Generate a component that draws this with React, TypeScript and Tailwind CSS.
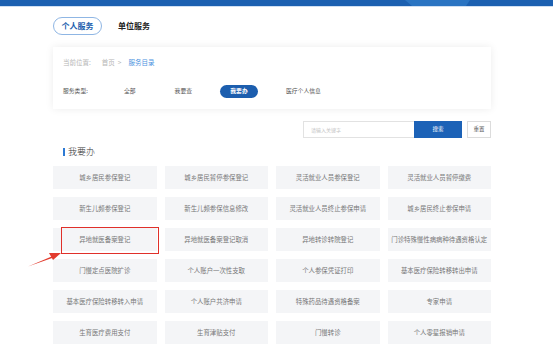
import React from "react";

const items = [
  "城乡居民参保登记",
  "城乡居民暂停参保登记",
  "灵活就业人员参保登记",
  "灵活就业人员暂停缴费",
  "新生儿频参保登记",
  "新生儿频参保信息修改",
  "灵活就业人员终止参保申请",
  "城乡居民终止参保申请",
  "异地就医备案登记",
  "异地就医备案登记取消",
  "异地转诊转院登记",
  "门诊特殊慢性病病种待遇资格认定",
  "门慢定点医院扩诊",
  "个人账户一次性支取",
  "个人参保凭证打印",
  "基本医疗保险转移转出申请",
  "基本医疗保险转移转入申请",
  "个人账户共济申请",
  "特殊药品待遇资格备案",
  "专家申请",
  "生育医疗费用支付",
  "生育津贴支付",
  "门慢转诊",
  "个人零星报销申请",
];

const font = { fontFamily: '"Noto Sans CJK SC", "Noto Sans", sans-serif' };

export default function App() {
  return (
    <div className="relative w-[553px] h-[357px] bg-white overflow-hidden" style={font}>
      {/* top bar */}
      <div className="relative h-[6px] bg-[#1b60b1]">
        <svg className="absolute left-0 top-0" width="553" height="6">
          <polygon points="405,0 470,0 466,6 412,6" fill="#2a74c2" />
        </svg>
      </div>
      <div className="h-px bg-[#cfdff2]" />

      <div className="ml-[53px] w-[438px]">
        {/* tabs */}
        <div className="mt-[10px] flex items-center h-[18px]">
          <div className="h-[18px] w-[49px] rounded-full border border-[#8fb6e4] flex items-center justify-center text-[8px] font-bold text-[#1d5fae]">
            个人服务
          </div>
          <div className="ml-[16px] text-[8px] font-bold text-[#222]">单位服务</div>
        </div>

        {/* filter card */}
        <div className="mt-[12px] h-[62px] bg-white shadow-[0_0_8px_rgba(0,0,0,0.08)] px-[10px] pt-[12px]">
          <div className="flex items-center h-[8px] text-[6.5px] text-[#b5b5b5]">
            <span>当前位置:</span>
            <span className="ml-[11px]">首页</span>
            <span className="ml-[3px]">&gt;</span>
            <span className="ml-[7px] text-[#4c92e0]">服务目录</span>
          </div>
          <div className="mt-[18px] flex items-center h-[13px] text-[5.8px] text-[#555]">
            <span className="w-[27px]">服务类型:</span>
            <span className="ml-[34px]">全部</span>
            <span className="ml-[39px]">我要查</span>
            <span className="ml-[28px] h-[13px] w-[38px] rounded-full bg-[#1c5eae] text-white font-bold flex items-center justify-center">
              我要办
            </span>
            <span className="ml-[28px]">医疗个人信息</span>
          </div>
        </div>

        {/* search */}
        <div className="mt-[12px] flex justify-end items-center h-[17px]">
          <div className="h-[17px] w-[111px] border border-[#e2e2e2] border-r-0 flex items-center pl-[7px] text-[5px] text-[#c4c4c4]">
            请输入关键字
          </div>
          <div className="h-[17px] w-[48px] bg-[#1c62b7] text-white text-[5.5px] flex items-center justify-center">
            搜索
          </div>
          <div className="ml-[5px] h-[17px] w-[24px] border border-[#dcdcdc] text-[5.5px] text-[#555] flex items-center justify-center">
            重置
          </div>
        </div>

        {/* heading */}
        <div className="mt-[8px] flex items-center h-[12px] pl-[10px]">
          <div className="w-[2px] h-[8px] bg-[#2e7ad4]" />
          <span className="ml-[3px] text-[9px] font-light text-[#333]">我要办</span>
        </div>

        {/* grid */}
        <div className="mt-[8px] grid grid-cols-4 gap-x-[8px] gap-y-[8px]">
          {items.map((t) => (
            <div
              key={t}
              className="h-[23px] bg-[#f4f5f7] flex items-center justify-center text-[6.4px] text-[#777] whitespace-nowrap"
            >
              {t}
            </div>
          ))}
        </div>
      </div>

      {/* annotation */}
      <div className="absolute left-[61px] top-[227px] w-[98px] h-[27px] border-[1.5px] border-[#e0302a]" />
      <svg className="absolute left-0 top-0" width="553" height="357">
        <polygon points="28,266.5 54,255.5 55,257" fill="#e23b2e" />
        <polygon points="61,253 49,253 53,260" fill="#e23b2e" />
      </svg>
    </div>
  );
}
